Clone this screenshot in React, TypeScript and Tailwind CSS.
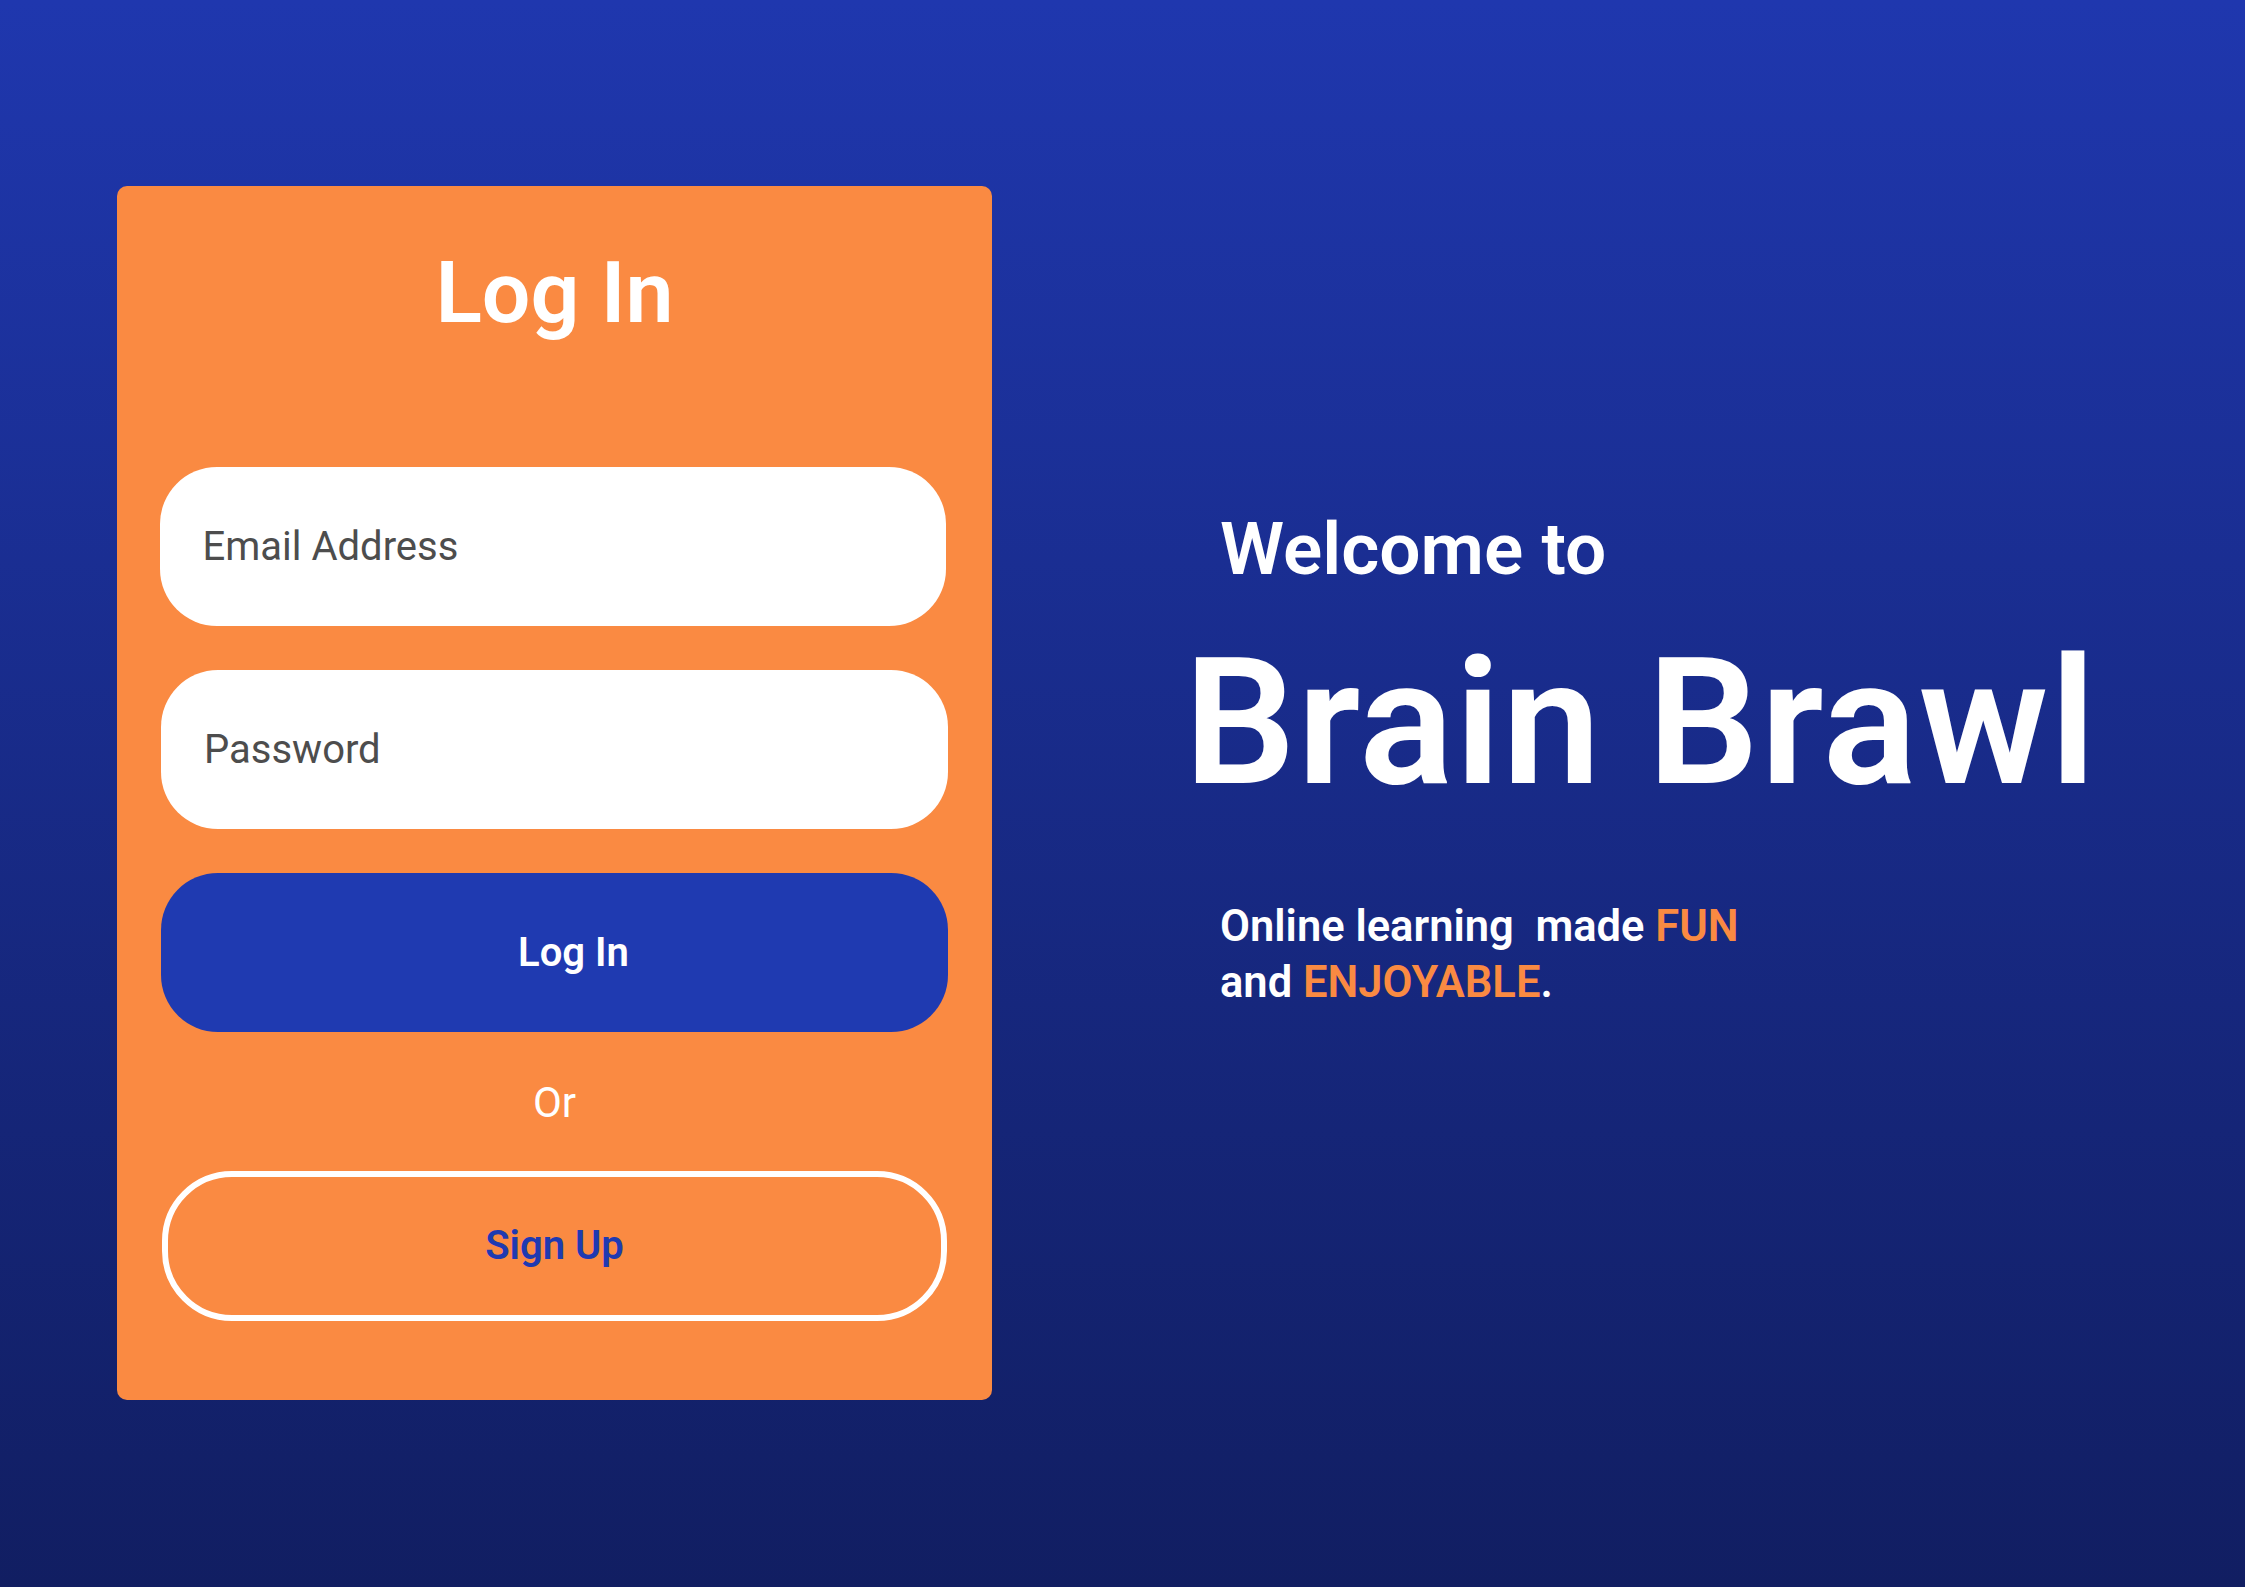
import React from "react"

const font = { fontFamily: 'Roboto, "Noto Sans", sans-serif' }

function LoginCard() {
  return (
    <div className="w-[875px] h-[1214px] rounded-[10px] bg-[#fa8a42] flex flex-col items-center shrink-0">
      <h1 className="mt-[64px] h-[86px] text-[86px] leading-none font-semibold text-white">Log In</h1>
      <div className="mt-[131px] h-[159px] w-[786px] -translate-x-[2px] rounded-[57px] bg-white flex items-center pl-[43px] text-[40px] text-[#4d4d4d]">
        Email Address
      </div>
      <div className="mt-[44px] h-[159px] w-[787px] rounded-[57px] bg-white flex items-center pl-[43px] text-[40px] text-[#4d4d4d]">
        Password
      </div>
      <button className="mt-[44px] h-[159px] w-[787px] rounded-[57px] bg-[#1f3ab1] flex items-center justify-center pl-[38px] text-[40px] font-semibold text-white">
        Log In
      </button>
      <div className="mt-[50px] h-[42px] text-[42px] leading-none text-white font-normal">Or</div>
      <button className="mt-[47px] h-[150px] w-[785px] rounded-[70px] border-[6px] border-white flex items-center justify-center text-[40px] font-semibold text-[#1f3ab1]">
        Sign Up
      </button>
    </div>
  )
}

export default function App() {
  return (
    <div
      className="w-full h-[1587px] bg-gradient-to-b from-[#1f37ae] to-[#111e62] flex pl-[117px] pt-[186px]"
      style={font}>
      <LoginCard />
      <div className="flex flex-col ml-[196px] pt-[327px]">
        <h2 className="ml-[32px] text-[73px] leading-none font-semibold text-white">Welcome to</h2>
        <h1 className="-ml-[4px] mt-[49px] text-[176px] tracking-[1.5px] leading-none font-semibold text-white">
          Brain Brawl
        </h1>
        <p className="ml-[32px] mt-[88px] text-[43.5px] leading-[56px] font-semibold text-white">
          Online learning&nbsp; made <span className="text-[#fa8a42]">FUN</span>
          <br />
          and <span className="text-[#fa8a42]">ENJOYABLE</span>.
        </p>
      </div>
    </div>
  )
}
